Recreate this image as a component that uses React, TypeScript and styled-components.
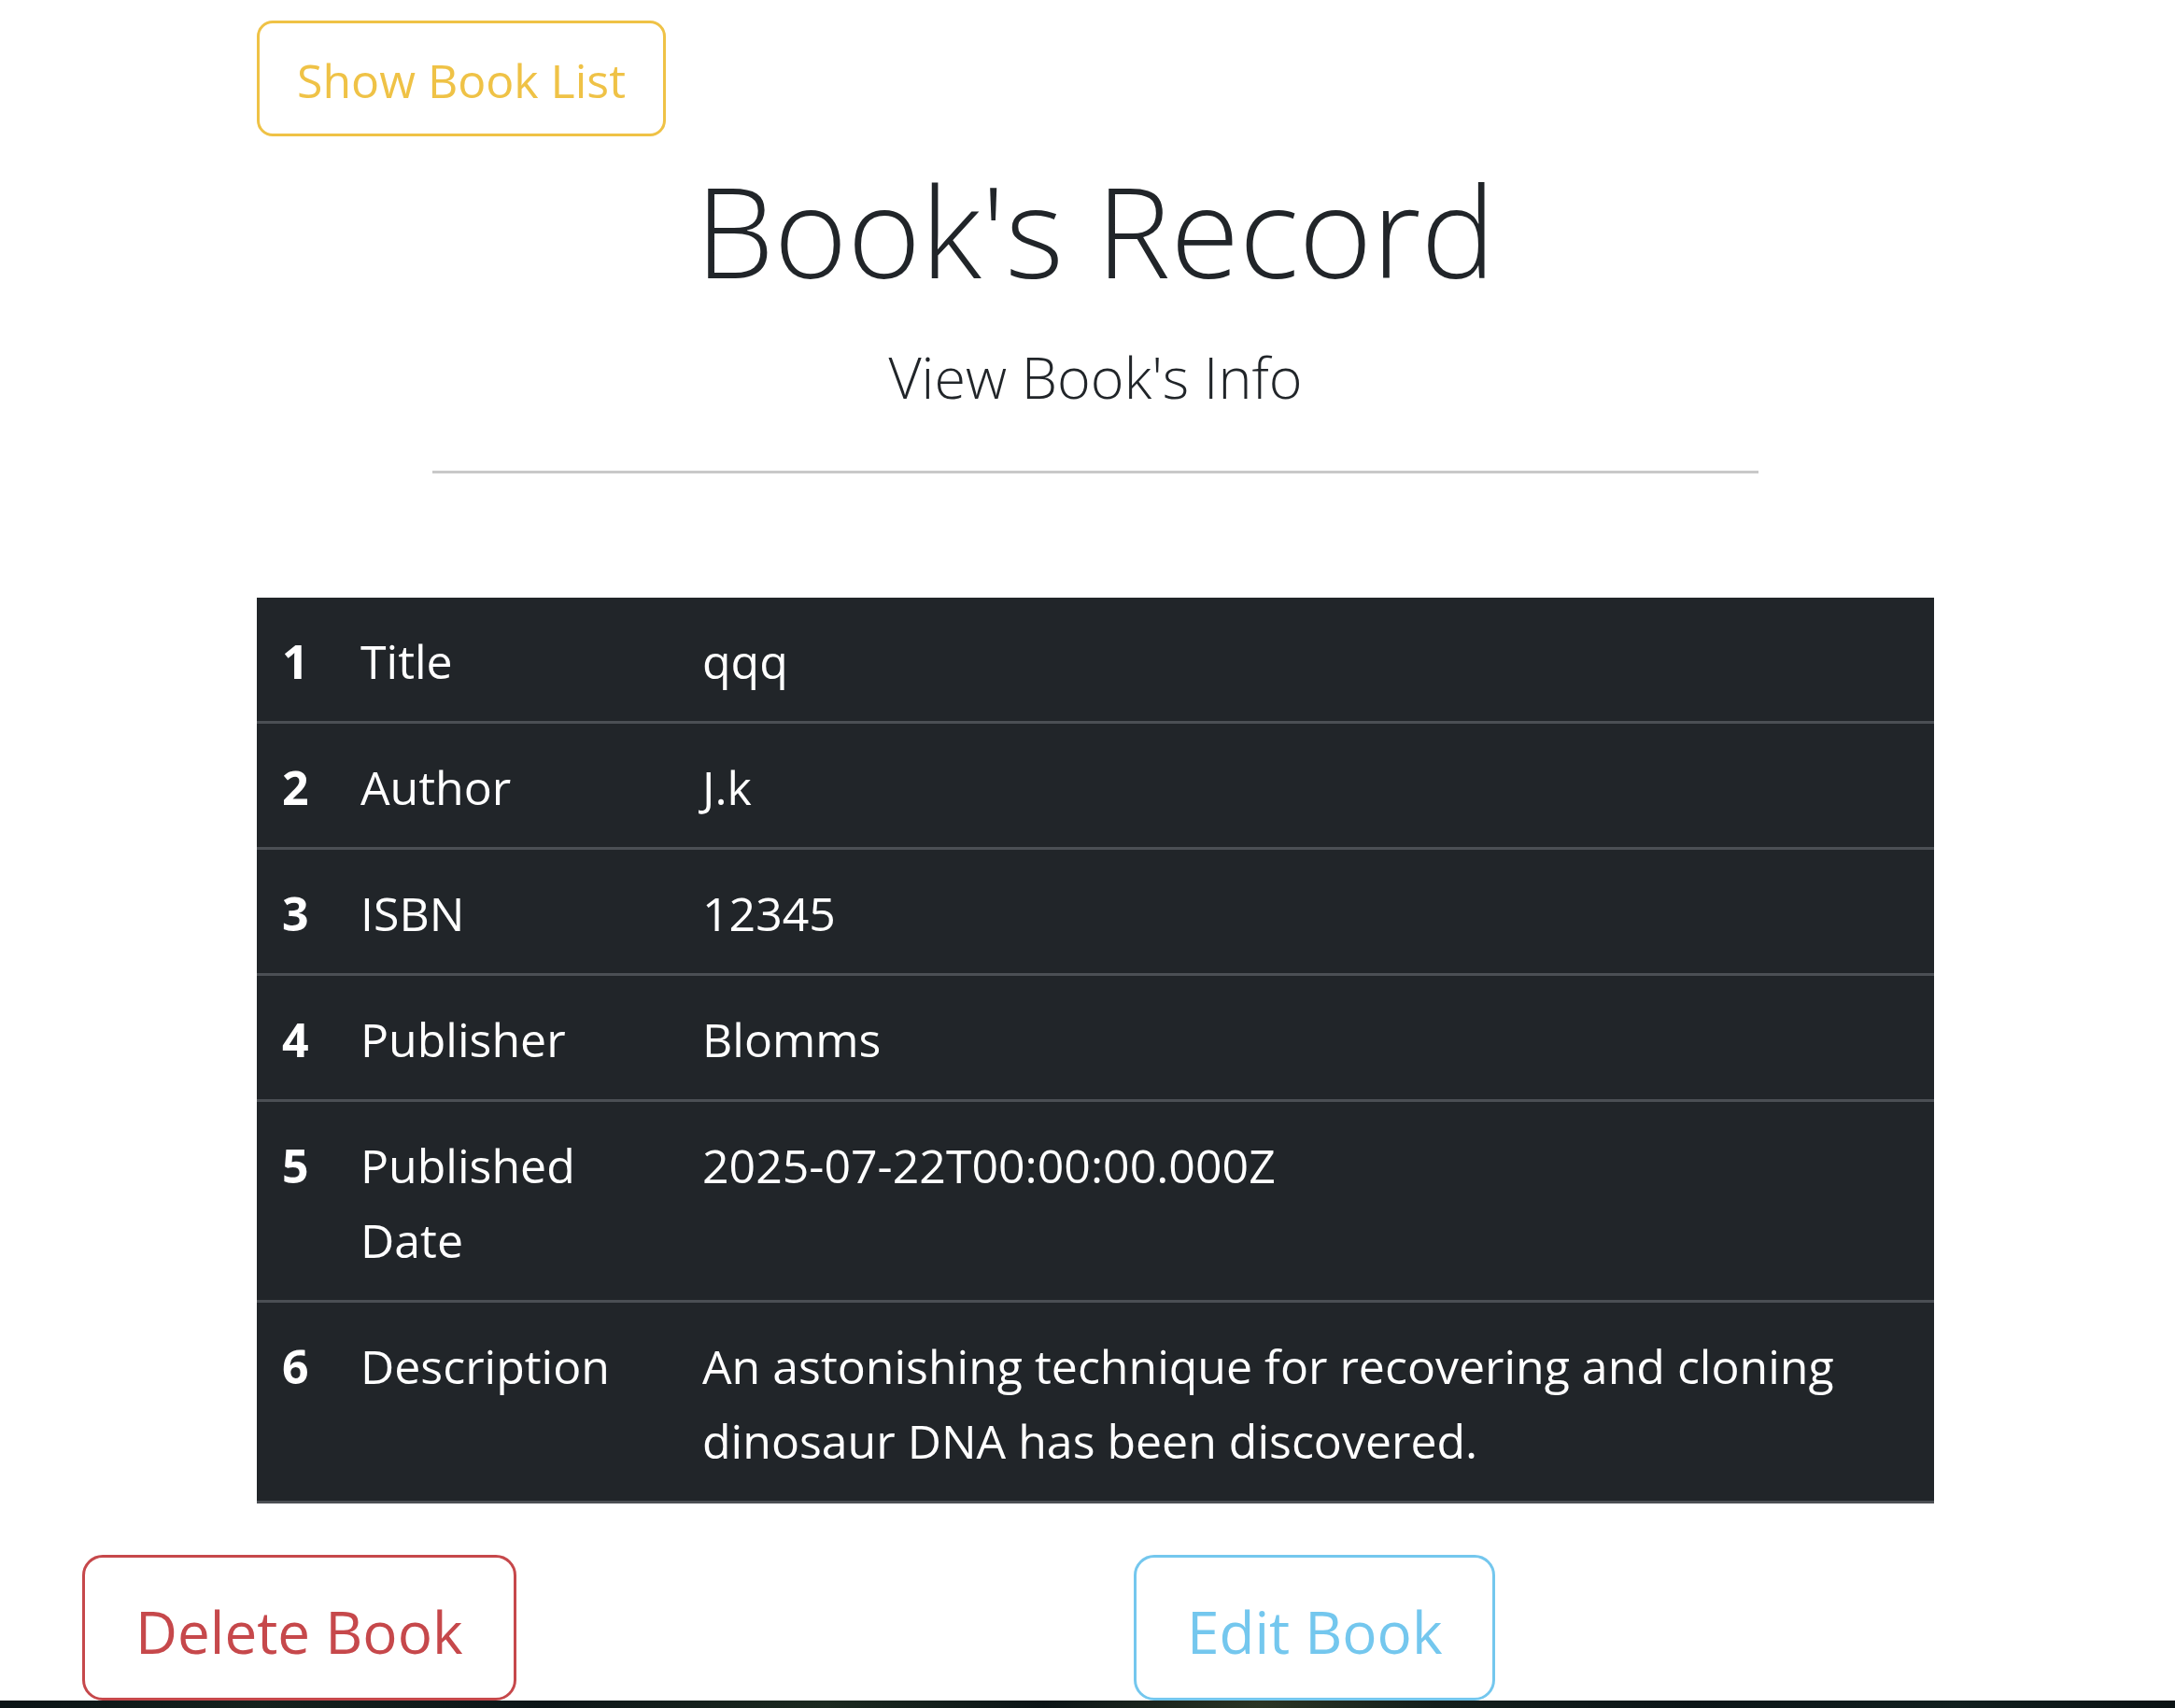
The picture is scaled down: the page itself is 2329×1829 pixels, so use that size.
import React from "react";
import styled, { createGlobalStyle } from "styled-components";

const GlobalStyle = createGlobalStyle`
  body {
    margin: 0;
    background: #fff;
    font-family: "Open Sans", "Noto Sans", sans-serif;
    color: #212529;
  }
`;

const rows = [
  { label: "Title", value: "qqq" },
  { label: "Author", value: "J.k" },
  { label: "ISBN", value: "12345" },
  { label: "Publisher", value: "Blomms" },
  { label: "Published Date", value: "2025-07-22T00:00:00.000Z" },
  {
    label: "Description",
    value:
      "An astonishing technique for recovering and cloning dinosaur DNA has been discovered.",
  },
];

export default function App() {
  return (
    <Page>
      <GlobalStyle />
      <Container>
        <TopRow>
          <OutlineButton $color="#efc246" $size="md">
            Show Book List
          </OutlineButton>
        </TopRow>
        <Heading>Book's Record</Heading>
        <Lead>View Book's Info</Lead>
        <Rule />
        <BookTable>
          <colgroup>
            <col style={{ width: 84 }} />
            <col style={{ width: 366 }} />
            <col />
          </colgroup>
          <tbody>
            {rows.map((r, i) => (
              <tr key={r.label}>
                <NumCell scope="row">{i + 1}</NumCell>
                <Cell>{r.label}</Cell>
                <Cell>{r.value}</Cell>
              </tr>
            ))}
          </tbody>
        </BookTable>
      </Container>
      <ActionRow>
        <div>
          <OutlineButton $color="#c6484b" $size="lg">
            Delete Book
          </OutlineButton>
        </div>
        <div>
          <OutlineButton $color="#74c7ee" $size="lg">
            Edit Book
          </OutlineButton>
        </div>
      </ActionRow>
      <Band />
    </Page>
  );
}

const Page = styled.div`
  min-height: 100vh;
  overflow: hidden;
`;

const Container = styled.div`
  width: 1796px;
  margin-left: 275px;
  padding-top: 22px;
`;

const TopRow = styled.div`
  display: flex;
`;

const OutlineButton = styled.button<{ $color: string; $size: "md" | "lg" }>`
  font-family: "Open Sans", "Noto Sans", sans-serif;
  background: transparent;
  color: ${(p) => p.$color};
  border: 3px solid ${(p) => p.$color};
  cursor: pointer;
  white-space: nowrap;
  font-size: ${(p) => (p.$size === "lg" ? "62px" : "50px")};
  line-height: ${(p) => (p.$size === "lg" ? "93px" : "75px")};
  padding: ${(p) => (p.$size === "lg" ? "33px 54px 24px" : "24px 40px 19px")};
  border-radius: ${(p) => (p.$size === "lg" ? "22px" : "17px")};
`;

const Heading = styled.h1`
  margin: 21px 0 0;
  text-align: center;
  font-weight: 300;
  font-size: 134px;
  line-height: 158px;
  color: #212529;
`;

const Lead = styled.p`
  margin: 34px 0 0;
  text-align: center;
  font-weight: 300;
  font-size: 61px;
  line-height: 90px;
  color: #212529;
`;

const Rule = styled.hr`
  width: 1420px;
  margin: 55px auto 0;
  border: 0;
  border-top: 3px solid #c9c9c9;
`;

const BookTable = styled.table`
  width: 100%;
  margin-top: 133px;
  border-collapse: collapse;
  table-layout: fixed;
  background: #212529;
  color: #fff;
  font-size: 50px;
  line-height: 80px;

  tr {
    border-bottom: 3px solid #4b4f54;
  }
`;

const Cell = styled.td`
  padding: 28px 27px 24px;
  vertical-align: top;
  text-align: left;
`;

const NumCell = styled.th`
  padding: 28px 0 24px 27px;
  vertical-align: top;
  text-align: left;
  font-weight: 700;
`;

const ActionRow = styled.div`
  display: grid;
  grid-template-columns: 1126px 1126px;
  padding-left: 88px;
  margin-top: 55px;
`;

const Band = styled.div`
  height: 40px;
  background: linear-gradient(
    90deg,
    #0b1416 0%,
    #15221d 12%,
    #0d1618 25%,
    #1c2a20 38%,
    #0c1517 48%,
    #2b3524 58%,
    #141f1c 66%,
    #0c1618 78%,
    #12201f 90%,
    #0b1314 100%
  );
`;
